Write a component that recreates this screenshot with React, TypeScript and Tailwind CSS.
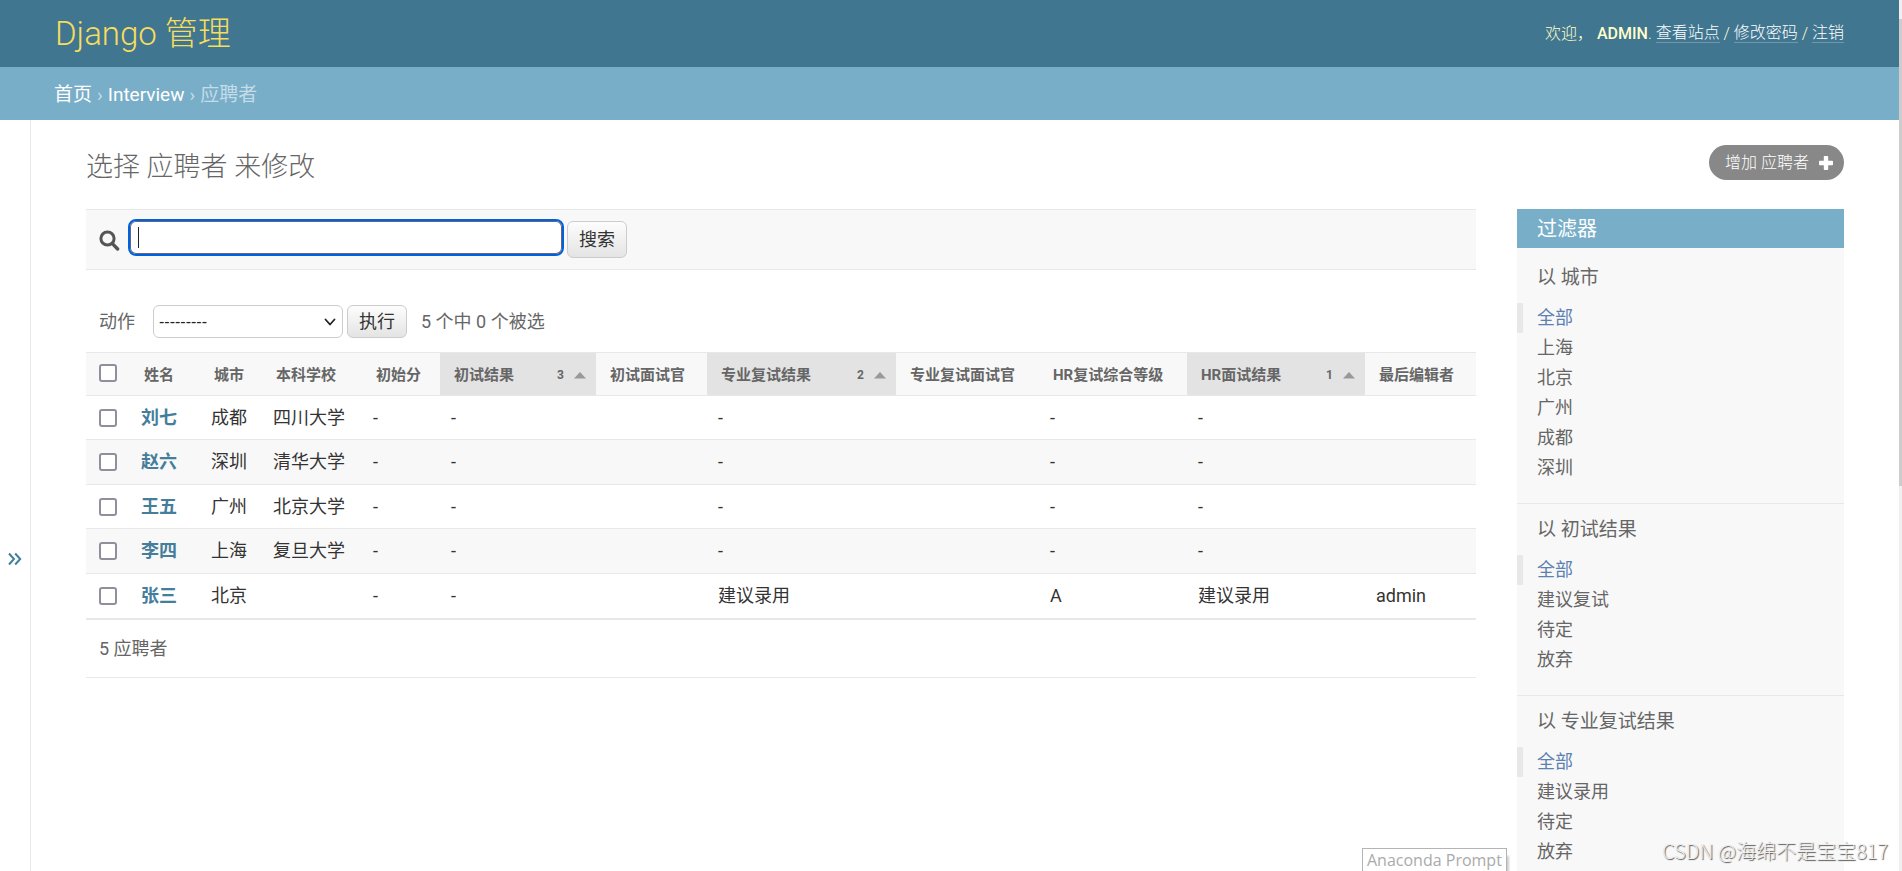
import React from "react";

type Column = {
  label: string;
  width: string;
  sort?: number;
};

type Applicant = {
  name: string;
  cells: string[];
};

const columns: Column[] = [
  { label: "姓名", width: "w-[70px]" },
  { label: "城市", width: "w-[62px]" },
  { label: "本科学校", width: "w-[100px]" },
  { label: "初始分", width: "w-[78px]" },
  { label: "初试结果", width: "w-[156px]", sort: 3 },
  { label: "初试面试官", width: "w-[111px]" },
  { label: "专业复试结果", width: "w-[189px]", sort: 2 },
  { label: "专业复试面试官", width: "w-[143px]" },
  { label: "HR复试综合等级", width: "w-[148px]" },
  { label: "HR面试结果", width: "w-[178px]", sort: 1 },
  { label: "最后编辑者", width: "w-[111px]" },
];

const applicants: Applicant[] = [
  { name: "刘七", cells: ["成都", "四川大学", "-", "-", "", "-", "", "-", "-", ""] },
  { name: "赵六", cells: ["深圳", "清华大学", "-", "-", "", "-", "", "-", "-", ""] },
  { name: "王五", cells: ["广州", "北京大学", "-", "-", "", "-", "", "-", "-", ""] },
  { name: "李四", cells: ["上海", "复旦大学", "-", "-", "", "-", "", "-", "-", ""] },
  { name: "张三", cells: ["北京", "", "-", "-", "", "建议录用", "", "A", "建议录用", "admin"] },
];

const filters = [
  { title: "以 城市", options: ["全部", "上海", "北京", "广州", "成都", "深圳"] },
  { title: "以 初试结果", options: ["全部", "建议复试", "待定", "放弃"] },
  { title: "以 专业复试结果", options: ["全部", "建议录用", "待定", "放弃"] },
];

function Checkbox({ label }: { label: string }) {
  return (
    <input
      type="checkbox"
      aria-label={label}
      className="block size-[18px] appearance-none rounded-[3px] border-2 border-[#8f8f9d] bg-white"
    />
  );
}

function PushButton({ children, type }: { children: React.ReactNode; type: "submit" | "button" }) {
  return (
    <button
      type={type}
      className="h-full rounded-md border border-[#ccc] bg-linear-to-b from-[#fdfdfd] to-[#e4e4e4] px-[11px] text-lg leading-6 text-[#333]"
    >
      {children}
    </button>
  );
}

function Header() {
  return (
    <header className="flex h-[67px] shrink-0 items-center justify-between bg-[#417690] px-[55px] text-[#ffc]">
      <h1 className="text-[33px] leading-10 font-light text-[#f5dd5d]">
        <a href="#home">Django 管理</a>
      </h1>
      <div className="flex items-center text-base leading-[18px] font-light whitespace-pre">
        <span>欢迎， </span>
        <strong className="font-medium">ADMIN</strong>
        <span>. </span>
        <a href="#site" className="border-b border-white/25 text-white">查看站点</a>
        <span> / </span>
        <a href="#password" className="border-b border-white/25 text-white">修改密码</a>
        <span> / </span>
        <a href="#logout" className="border-b border-white/25 text-white">注销</a>
      </div>
    </header>
  );
}

function Breadcrumbs() {
  return (
    <nav
      aria-label="面包屑"
      className="flex h-[53px] shrink-0 items-center gap-[5px] bg-[#79aec8] px-[54px] pt-[2px] text-[19px] leading-6 text-[#c4dce8]"
    >
      <a href="#home" className="text-white">首页</a>
      <span>›</span>
      <a href="#interview" className="text-white">Interview</a>
      <span>›</span>
      <span>应聘者</span>
    </nav>
  );
}

function SearchBar() {
  return (
    <form className="flex h-[61px] items-start border-y border-[#e8e8e8] bg-[#f8f8f8] pt-[9px] pl-[13px]">
      <label htmlFor="searchbar" className="mt-[11px] mr-2">
        <svg width="21" height="21" viewBox="0 0 21 21" fill="none" stroke="#555" aria-hidden="true">
          <circle cx="8.5" cy="8.5" r="6.6" strokeWidth="3" />
          <path d="M13.4 13.6 18.6 19" strokeWidth="3.4" strokeLinecap="round" />
        </svg>
      </label>
      <div className="relative">
        <input
          id="searchbar"
          type="text"
          aria-label="搜索"
          className="block h-[37px] w-[436px] rounded-lg border-2 border-[#0060df] bg-white px-[7px] text-lg text-[#333] shadow-[inset_0_0_0_1px_#667] outline-none"
        />
        <span className="absolute top-2 left-[10px] h-[21px] w-px bg-[#222]" />
      </div>
      <div className="mt-[2px] ml-[3px] h-[37px]">
        <PushButton type="submit">搜索</PushButton>
      </div>
    </form>
  );
}

function Actions() {
  return (
    <div className="flex h-[33px] items-center pl-[13px] text-lg leading-6 text-[#666]">
      <label htmlFor="action">动作</label>
      <div className="relative ml-[18px]">
        <select
          id="action"
          className="block h-[33px] w-[190px] appearance-none rounded-md border border-[#ccc] bg-white pl-[5px] font-['Liberation_Sans',sans-serif] text-base text-[#222] outline-none"
        >
          <option>---------</option>
        </select>
        <svg
          className="pointer-events-none absolute top-[13px] right-[7px]"
          width="12"
          height="9"
          viewBox="0 0 12 9"
          fill="none"
          stroke="#222"
          strokeWidth="1.8"
          strokeLinecap="round"
          strokeLinejoin="round"
          aria-hidden="true"
        >
          <path d="m1.5 1.5 4.5 5 4.5-5" />
        </svg>
      </div>
      <div className="ml-1 h-[33px]">
        <PushButton type="button">执行</PushButton>
      </div>
      <span className="ml-[14px]">5 个中 0 个被选</span>
    </div>
  );
}

function ResultTable() {
  return (
    <table className="w-full table-fixed border-collapse text-left">
      <colgroup>
        <col className="w-[44px]" />
        {columns.map((column) => (
          <col key={column.label} className={column.width} />
        ))}
      </colgroup>
      <thead>
        <tr className="h-[43px] border-y border-[#e8e8e8] bg-[#f8f8f8] text-[15px] leading-5 font-bold text-[#666]">
          <th className="pb-[2px] pl-[13px]">
            <Checkbox label="全选" />
          </th>
          {columns.map((column) =>
            column.sort ? (
              <th key={column.label} className="bg-[#e3e3e3] pt-[2px] pr-[10px] pl-[14px]">
                <div className="flex items-center whitespace-nowrap">
                  <a href="#sort" className="flex-1">{column.label}</a>
                  <span className="text-xs leading-5">{column.sort}</span>
                  <svg className="ml-[10px]" width="12" height="7" viewBox="0 0 12 7" fill="#999" aria-hidden="true">
                    <path d="M6 0 12 6.5H0z" />
                  </svg>
                </div>
              </th>
            ) : (
              <th key={column.label} className="pt-[2px] pl-[14px] whitespace-nowrap">
                <a href="#sort">{column.label}</a>
              </th>
            ),
          )}
        </tr>
      </thead>
      <tbody>
        {applicants.map((applicant) => (
          <tr
            key={applicant.name}
            className="h-11 border-b border-[#e8e8e8] text-lg leading-6 text-[#333] last:border-b-2 even:h-[45px] even:bg-[#f8f8f8] last:h-[45px]"
          >
            <td className="pl-[13px]">
              <Checkbox label={applicant.name} />
            </td>
            <th className="pl-[11px] font-bold text-[#447e9b]">
              <a href="#change">{applicant.name}</a>
            </th>
            {applicant.cells.map((cell, index) => (
              <td key={index} className="pl-[11px] whitespace-nowrap">{cell}</td>
            ))}
          </tr>
        ))}
      </tbody>
    </table>
  );
}

function FilterPanel() {
  return (
    <aside className="w-[327px] shrink-0 self-start bg-[#f8f8f8] text-[#666]">
      <h2 className="mb-1 bg-[#79aec8] px-5 pt-[9px] pb-[7px] text-xl leading-[23px] text-white">过滤器</h2>
      {filters.map((group) => (
        <section key={group.title} className="border-b border-[#e8e8e8] pb-5">
          <h3 className="px-5 pt-[13px] pb-3 text-[19px] leading-[26px]">{group.title}</h3>
          <ul className="text-lg leading-[30px]">
            {group.options.map((option, index) => (
              <li
                key={option}
                className={index === 0 ? "border-l-[6px] border-[#e8e8e8] pl-[14px] text-[#5b80b2]" : "pl-5"}
              >
                <a href="#filter">{option}</a>
              </li>
            ))}
          </ul>
        </section>
      ))}
    </aside>
  );
}

export default function App() {
  return (
    <div className="relative flex h-screen overflow-hidden bg-white font-['Roboto','Noto_Sans_CJK_SC',sans-serif]">
      <div className="flex min-w-0 flex-1 flex-col">
        <Header />
        <Breadcrumbs />
        <div className="flex min-h-0 flex-1 overflow-hidden">
          <button
            type="button"
            aria-label="切换导航"
            className="flex h-screen w-[31px] shrink-0 items-center justify-center border-r border-[#e8e8e8] pt-[7px] text-[#417f9f]"
          >
            <svg
              width="14"
              height="14"
              viewBox="0 0 14 14"
              fill="none"
              stroke="currentColor"
              strokeWidth="2"
              aria-hidden="true"
            >
              <path d="m1 1.5 5 5.5-5 5.5M7.2 1.5l5 5.5-5 5.5" />
            </svg>
          </button>
          <main className="min-w-0 flex-1 px-[55px] pt-[25px]">
            <div className="flex h-16 items-start justify-between">
              <h1 className="pt-1 text-[27px] leading-9 font-light text-[#666]">选择 应聘者 来修改</h1>
              <a
                href="#add"
                className="flex h-[35px] items-center gap-[10px] rounded-full bg-[#888] pr-[11px] pl-4 text-base leading-5 font-light text-white"
              >
                增加 应聘者
                <svg width="14" height="14" viewBox="0 0 14 14" fill="#fff" aria-hidden="true">
                  <rect x="4.8" y="0" width="4.4" height="14" rx="0.8" />
                  <rect x="0" y="4.8" width="14" height="4.4" rx="0.8" />
                </svg>
              </a>
            </div>
            <div className="flex gap-[41px]">
              <div className="min-w-0 flex-1">
                <SearchBar />
                <div className="pt-[35px] pb-[14px]">
                  <Actions />
                </div>
                <ResultTable />
                <p className="border-b border-[#e8e8e8] px-[13px] pt-[17px] pb-4 text-lg leading-6 text-[#666]">
                  5 应聘者
                </p>
              </div>
              <FilterPanel />
            </div>
          </main>
        </div>
      </div>
      <div className="w-[3px] shrink-0 bg-[#f0f0f0] pt-[19px]">
        <div className="h-[467px] bg-[#cdcdcd]" />
      </div>
      <div className="absolute bottom-0 left-[1362px] border border-b-0 border-[#b4b4b4] bg-white px-1 font-['Open_Sans',sans-serif] text-base leading-[22px] whitespace-nowrap text-[#aaa] shadow-[3px_7px_2px_-1px_#ccc]">
        Anaconda Prompt
      </div>
      <div className="absolute right-[14px] bottom-[6px] font-['Noto_Sans_CJK_SC',sans-serif] text-xl leading-7 font-light whitespace-nowrap text-[#eee] [text-shadow:1px_1px_1px_#555]">
        CSDN @海绵不是宝宝817
      </div>
    </div>
  );
}
